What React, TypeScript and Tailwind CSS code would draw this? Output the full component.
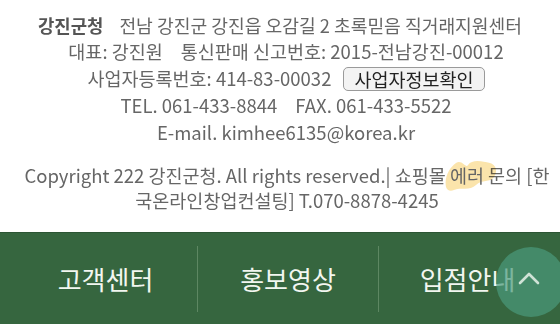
import React from 'react';

const font = { fontFamily: '"Noto Sans CJK KR", "Noto Sans", sans-serif' };

function InfoLines() {
  return (
    <div className="pl-[12px] pt-[11px] text-center text-[18.5px] leading-[27px] text-[#666]">
      <div className="-ml-[12px] pt-[2px] leading-[25px]">
        <span className="text-[17.8px] font-bold text-[#555]">강진군청</span>
        <span className="ml-[16px] text-[18.2px]">전남 강진군 강진읍 오감길 2 초록믿음 직거래지원센터</span>
      </div>
      <div>
        대표: 강진원<span className="ml-[18px]">통신판매 신고번호: 2015-전남강진-00012</span>
      </div>
      <div className="flex items-center justify-center">
        <span>사업자등록번호: 414-83-00032</span>
        <button className="ml-[12px] h-[24px] rounded-[5px] border border-[#9a9a9a] bg-[#f3f3f3] px-[10px] text-[18.5px] leading-[22px] text-[#222]">
          사업자정보확인
        </button>
      </div>
      <div>
        TEL. 061-433-8844<span className="ml-[18px]">FAX. 061-433-5522</span>
      </div>
      <div>E-mail. kimhee6135@korea.kr</div>
    </div>
  );
}

function Copyright() {
  return (
    <div className="mt-[17px] pb-[19px] pl-[14px] text-center text-[18.5px] leading-[25px] text-[#666]">
      <div className="whitespace-nowrap">
        Copyright 222 강진군청. All rights reserved.| 쇼핑몰{' '}
        <span className="relative inline-block">
          <svg
            className="pointer-events-none absolute left-[-8px] top-[-8px] h-[40px] w-[58px] mix-blend-multiply"
            viewBox="0 0 58 36"
          >
            <path
              d="M4 30 C2 20 8 10 14 6 C20 2 24 12 26 8 C30 2 40 4 48 6 C54 8 56 14 52 20 C48 26 40 22 34 28 C28 34 18 30 12 33 C8 35 5 33 4 30 Z"
              fill="#f6c445"
              fillOpacity="0.45"
            />
          </svg>
          <span className="relative">에러</span>
        </span>{' '}
        문의 [한
      </div>
      <div>국온라인창업컨설팅] T.070-8878-4245</div>
    </div>
  );
}

function BottomNav() {
  return (
    <div className="relative h-[92px] border-t border-[#2c5534] bg-[#36663f]">
      <div className="flex h-full items-center">
        <div className="flex w-[197px] items-center justify-center pl-[14px] text-[26px] text-[#f2f6f0]">
          고객센터
        </div>
        <div className="h-[66px] w-px bg-[#5d8762]" />
        <div className="flex w-[180px] items-center justify-center text-[26px] text-[#f2f6f0]">
          홍보영상
        </div>
        <div className="h-[66px] w-px bg-[#5d8762]" />
        <div className="flex flex-1 items-center justify-center pr-[4px] text-[26px] text-[#f2f6f0]">
          입점안내
        </div>
      </div>
      <button className="absolute left-[496px] top-[14px] flex h-[70px] w-[70px] items-center justify-center rounded-full bg-[#4a9a7c]/70">
        <svg width="22" height="14" viewBox="0 0 22 14" className="-mt-[8px] -ml-[4px]">
          <path d="M2 12 L11 3 L20 12" fill="none" stroke="#cfe2d6" strokeWidth="2.6" strokeLinecap="round" strokeLinejoin="round" />
        </svg>
      </button>
    </div>
  );
}

export default function App() {
  return (
    <div className="h-[325px] w-[560px] overflow-hidden bg-white" style={font}>
      <InfoLines />
      <Copyright />
      <BottomNav />
    </div>
  );
}
